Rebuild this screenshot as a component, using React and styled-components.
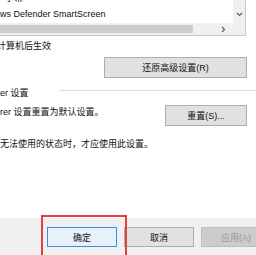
import styled, { createGlobalStyle } from "styled-components"

const GlobalStyle = createGlobalStyle`
  html, body {
    margin: 0;
    padding: 0;
  }
  body {
    width: 256px;
    height: 255px;
    overflow: hidden;
    background: #fff;
    font-family: "Liberation Sans", "Noto Sans CJK SC", sans-serif;
    font-size: 9px;
    color: #111;
  }
`

const Dialog = styled.div`
    width: 256px;
    height: 255px;
    display: flex;
    flex-direction: column;
    overflow: hidden;
`

const Body = styled.div`
    flex: 1;
    background: #fff;
    display: flex;
    flex-direction: column;
`

const ListBox = styled.div`
    width: 246px;
    height: 36px;
    box-sizing: border-box;
    border-right: 1px solid #c8c8c8;
    border-bottom: 1px solid #c8c8c8;
    display: grid;
    grid-template-columns: 1fr 12px;
    grid-template-rows: 1fr 12px;
`

const Items = styled.div`
    overflow: hidden;
    white-space: nowrap;
`

const Item = styled.div`
    line-height: 16px;
    padding-left: ${p => p.$indent || 0}px;
    &:first-child {
        margin-top: -10px;
    }
`

const VScroll = styled.div`
    background: #f0f0f0;
    display: flex;
    flex-direction: column;
    justify-content: flex-end;
    align-items: center;
    padding-bottom: 5px;
`

const HScroll = styled.div`
    display: flex;
    background: #f0f0f0;
`

const Thumb = styled.div`
    width: 193px;
    background: #cdcdcd;
    margin: 2px 0;
`

const Track = styled.div`
    flex: 1;
    display: flex;
    justify-content: flex-end;
    align-items: center;
    padding-right: 6px;
`

const Corner = styled.div`
    background: #f0f0f0;
`

const Line = styled.div`
    line-height: 12px;
    white-space: nowrap;
    margin-top: ${p => p.$top || 0}px;
    margin-left: ${p => p.$left || 0}px;
`

const ButtonRow = styled.div`
    display: flex;
    justify-content: ${p => p.$between ? "space-between" : "flex-end"};
    align-items: flex-start;
    padding-right: 9px;
    margin-top: ${p => p.$top || 0}px;
`

const Button = styled.div`
    box-sizing: border-box;
    width: ${p => p.$w}px;
    height: ${p => p.$h || 21}px;
    display: flex;
    align-items: center;
    justify-content: center;
    background: ${p => p.$primary ? "#e5f1fb" : p.$disabled ? "#cccccc" : "#e1e1e1"};
    border: 1px solid ${p => p.$primary ? "#3c8fdc" : p.$disabled ? "#bfbfbf" : "#adadad"};
    color: ${p => p.$disabled ? "#9a9a9a" : "#111"};
    flex-shrink: 0;
`

const GroupHeader = styled.div`
    display: flex;
    align-items: flex-start;
    margin-top: 9px;
`

const Rule = styled.div`
    flex: 1;
    height: 1px;
    background: #dcdcdc;
    margin-top: 3px;
    margin-left: 30px;
`

const Footer = styled.div`
    height: 37px;
    background: #f0f0f0;
    display: flex;
    gap: 7px;
    padding: 9px 0 0 47px;
    box-sizing: border-box;
`

const Highlight = styled.div`
    position: relative;
`

const RedBox = styled.div`
    position: absolute;
    left: -6px;
    top: -12px;
    width: 86px;
    height: 50px;
    box-sizing: border-box;
    border: 2px solid #e2403f;
    pointer-events: none;
`

const Chevron = ({ dir }) => (
  <svg width="7" height="7" viewBox="0 0 7 7">
    <path
      d={dir === "down" ? "M1 2 L3.5 4.5 L6 2" : "M2 1 L4.5 3.5 L2 6"}
      fill="none"
      stroke="#606060"
      strokeWidth="1.2"
    />
  </svg>
)

const App = () => {
  return (
    <Dialog>
      <GlobalStyle />
      <Body>
        <ListBox>
          <Items>
            <Item $indent={5}>字幕</Item>
            <Item>ws Defender SmartScreen</Item>
          </Items>
          <VScroll><Chevron dir="down" /></VScroll>
          <HScroll>
            <Thumb />
            <Track><Chevron dir="right" /></Track>
          </HScroll>
          <Corner />
        </ListBox>
        <Line $top={4} $left={-3}>计算机后生效</Line>
        <ButtonRow $top={5}>
          <Button $w={143}>还原高级设置(R)</Button>
        </ButtonRow>
        <GroupHeader>
          <Line>er 设置</Line>
          <Rule />
        </GroupHeader>
        <ButtonRow $between $top={6}>
          <Line $top={1}>rer 设置重置为默认设置。</Line>
          <Button $w={82}>重置(S)...</Button>
        </ButtonRow>
        <Line $top={12}>无法使用的状态时，才应使用此设置。</Line>
      </Body>
      <Footer>
        <Highlight>
          <Button $w={70} $h={20} $primary>确定</Button>
          <RedBox />
        </Highlight>
        <Button $w={70} $h={20}>取消</Button>
        <Button $w={70} $h={20} $disabled>应用(A)</Button>
      </Footer>
    </Dialog>
  )
}

export default App
